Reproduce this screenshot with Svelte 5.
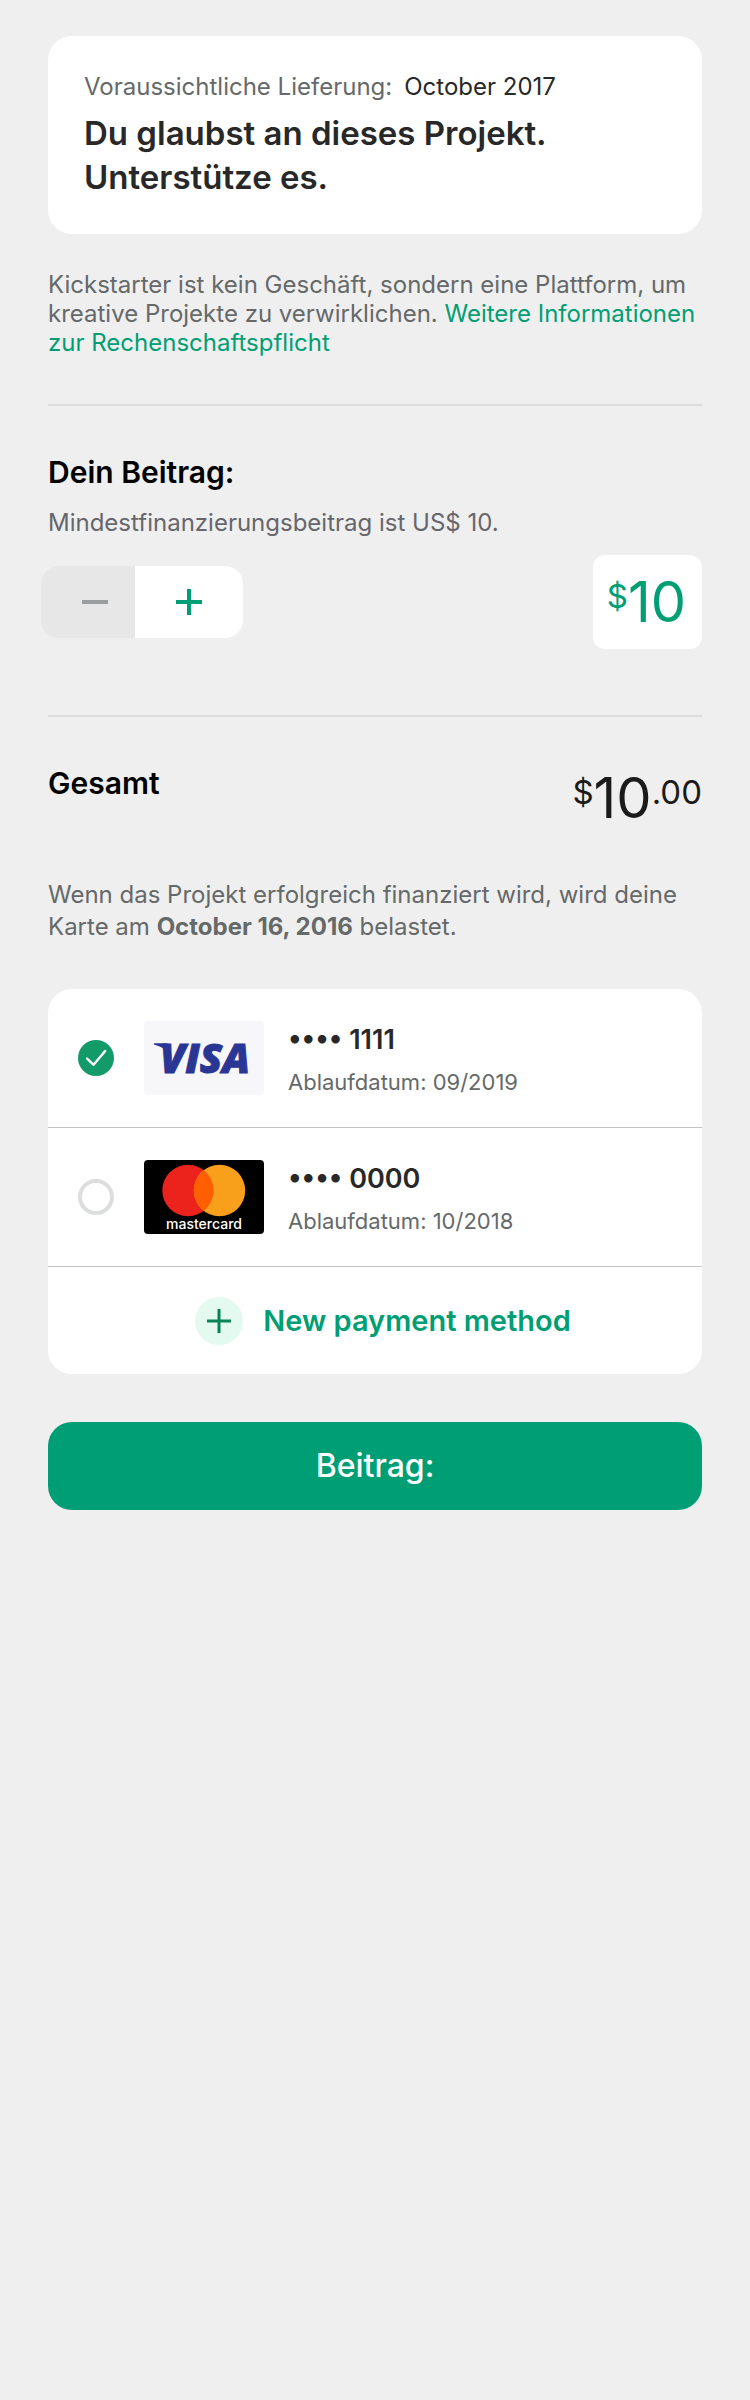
<script>
  const minimum = 10;
  let amount = $state(10);
  let selected = $state('visa');

  const cards = [
    { id: 'visa', digits: '1111', expires: '09/2019' },
    { id: 'mastercard', digits: '0000', expires: '10/2018' }
  ];
</script>

<main>
  <section class="card summary">
    <p class="delivery"><span>Voraussichtliche Lieferung:</span><time datetime="2017-10">October 2017</time></p>
    <h1>Du glaubst an dieses Projekt. Unterstütze es.</h1>
  </section>

  <p class="disclaimer">
    Kickstarter ist kein Geschäft, sondern eine Plattform, um kreative Projekte zu verwirklichen.
    <a href="#rechenschaft">Weitere Informationen zur Rechenschaftspflicht</a>
  </p>

  <hr />

  <section class="pledge">
    <h2><label for="amount">Dein Beitrag:</label></h2>
    <p class="hint">Mindestfinanzierungsbeitrag ist US$ {minimum}.</p>
    <div class="controls">
      <div class="stepper">
        <button type="button" class="minus" aria-label="Weniger" disabled={amount <= minimum} onclick={() => (amount -= 1)}>
          <svg width="26" height="26" viewBox="0 0 26 26"><path d="M0 13h26" /></svg>
        </button>
        <button type="button" class="plus" aria-label="Mehr" onclick={() => (amount += 1)}>
          <svg width="26" height="26" viewBox="0 0 26 26"><path d="M0 13h26M13 0v26" /></svg>
        </button>
      </div>
      <div class="amount">
        <span class="small">$</span><input id="amount" type="text" inputmode="numeric" bind:value={amount} />
      </div>
    </div>
  </section>

  <hr class="second" />

  <section class="total">
    <h2>Gesamt</h2>
    <p class="sum"><span class="small">$</span><span>{amount}</span><span class="small">.00</span></p>
  </section>

  <p class="charge">
    Wenn das Projekt erfolgreich finanziert wird, wird deine Karte am <strong>October 16, 2016</strong> belastet.
  </p>

  <section class="card methods">
    {#each cards as card (card.id)}
      <label class="method">
        <span class="radio">
          <input type="radio" name="method" value={card.id} bind:group={selected} />
          {#if selected === card.id}
            <svg width="36" height="36" viewBox="0 0 36 36"><path d="M9 18.5l6.5 6.3L27.2 11" /></svg>
          {/if}
        </span>
        {#if card.id === 'visa'}
          <svg class="logo" width="120" height="74" viewBox="0 0 120 74" role="img" aria-label="Visa">
            <rect width="120" height="74" rx="4" fill="#f7f7fa" />
            <path d="M10 22.2h12c2 0 3 1 3.400 3l2.600 13C24 29.500 18 25.500 10 23.400z" fill="#2a3694" />
            <text class="visa" x="16" y="51.5">VISA</text>
          </svg>
        {:else}
          <svg class="logo" width="120" height="74" viewBox="0 0 120 74" role="img" aria-label="Mastercard">
            <rect width="120" height="74" rx="4" fill="#000" />
            <circle cx="44" cy="30.5" r="25.7" fill="#ec221c" />
            <circle cx="75.5" cy="30.5" r="25.7" fill="#f8a01b" />
            <path d="M59.75 10.2a25.7 25.7 0 0 1 0 40.6a25.7 25.7 0 0 1 0-40.6z" fill="#ff5f00" />
            <text class="mc" x="60" y="69" text-anchor="middle">mastercard</text>
          </svg>
        {/if}
        <span class="info">
          <span class="number">•••• {card.digits}</span>
          <span class="expiry">Ablaufdatum: {card.expires}</span>
        </span>
      </label>
    {/each}
    <button type="button" class="new">
      <span class="badge">
        <svg width="24" height="24" viewBox="0 0 24 24"><path d="M0 12h24M12 0v24" /></svg>
      </span>
      New payment method
    </button>
  </section>

  <button type="submit" class="submit">Beitrag:</button>
</main>

<style>
  :global(body) {
    background: #efefef;
  }

  main {
    padding: 36px 48px;
    font-family: Inter, "Liberation Sans", sans-serif;
    font-size: 24px;
    line-height: 32px;
    color: #656969;
  }

  main, main * {
    box-sizing: border-box;
  }

  h1, h2, p {
    margin: 0;
  }

  button, input {
    margin: 0;
    border: 0;
    font: inherit;
    cursor: pointer;
  }

  svg {
    display: block;
  }

  .card {
    background: #fff;
    border-radius: 24px;
    overflow: hidden;
  }

  .summary {
    padding: 35px 36px;
  }

  .delivery {
    display: flex;
    gap: 12px;
    margin-bottom: 8px;
  }

  time {
    color: #282828;
  }

  h1 {
    max-width: 520px;
    font-size: 33px;
    line-height: 44px;
    font-weight: 600;
    color: #282828;
  }

  h2 {
    font-size: 30px;
    line-height: 36px;
    font-weight: 600;
    color: #000;
  }

  .disclaimer {
    margin-top: 36px;
    line-height: 29px;
  }

  a {
    color: #009e74;
    text-decoration: none;
  }

  hr {
    height: 2px;
    margin: 47px 0 48px;
    border: 0;
    background: #dcdcdc;
  }

  hr.second {
    margin-top: 66px;
  }

  .hint {
    margin: 17px 0 16px;
    color: #66666c;
  }

  .controls {
    display: flex;
    align-items: center;
    justify-content: space-between;
  }

  .stepper {
    display: flex;
    height: 72px;
    margin-left: -7px;
    border-radius: 18px;
    overflow: hidden;
  }

  .stepper button {
    display: grid;
    place-items: center;
    padding: 0;
  }

  .stepper path {
    stroke: currentColor;
    stroke-width: 4;
  }

  .stepper .minus {
    width: 94px;
    padding-left: 14px;
    background: #fff;
    color: #009e74;
  }

  .stepper .minus:disabled {
    background: #e7e7e7;
    color: #9b9e9e;
  }

  .stepper .plus {
    width: 108px;
    background: #fff;
    color: #009e74;
  }

  .amount {
    display: flex;
    align-items: flex-start;
    padding: 19px 14px;
    border-radius: 12px;
    background: #fff;
    color: #009e74;
    font-size: 56px;
    line-height: 56px;
  }

  .amount input {
    width: 60px;
    height: 56px;
    padding: 0;
    background: none;
    color: inherit;
    field-sizing: content;
  }

  .small {
    font-size: 33px;
    line-height: 44px;
  }

  .total {
    display: flex;
    justify-content: space-between;
  }

  .sum {
    display: flex;
    margin-top: 5px;
    font-size: 56px;
    line-height: 56px;
    color: #1b1b1b;
  }

  .charge {
    margin-top: 53px;
  }

  .methods {
    margin-top: 46px;
  }

  .method {
    display: flex;
    align-items: center;
    height: 139px;
    padding: 0 30px;
    border-bottom: 1px solid #c3c3c3;
    cursor: pointer;
  }

  .radio {
    display: grid;
    margin-right: 30px;
  }

  .radio > * {
    grid-area: 1 / 1;
  }

  .radio input {
    appearance: none;
    width: 36px;
    height: 36px;
    border: 4px solid #dcdede;
    border-radius: 50%;
  }

  .radio input:checked {
    border: 0;
    background: #129a69;
  }

  .radio svg {
    pointer-events: none;
  }

  .radio path {
    fill: none;
    stroke: #fff;
    stroke-width: 2.4;
    stroke-linecap: round;
    stroke-linejoin: round;
  }

  .visa {
    font: italic 800 41px "Open Sans", sans-serif;
    fill: #2a3694;
    stroke: #2a3694;
    stroke-width: 1;
  }

  .mc {
    font: 500 14px Inter, sans-serif;
    fill: #fff;
  }

  .info {
    display: grid;
    gap: 4px;
    margin-left: 24px;
    padding-top: 3px;
  }

  .number {
    font-size: 27px;
    line-height: 40px;
    font-weight: 600;
    color: #282828;
  }

  .expiry {
    font-size: 22px;
    line-height: 36px;
  }

  .new {
    display: flex;
    align-items: center;
    justify-content: center;
    gap: 20px;
    width: 100%;
    height: 107px;
    padding: 0 0 0 16px;
    background: #fff;
    color: #009e74;
    font-size: 29px;
    line-height: 36px;
    font-weight: 600;
  }

  .badge {
    display: grid;
    place-items: center;
    width: 48px;
    height: 48px;
    border-radius: 50%;
    background: #e4f9f0;
  }

  .badge path {
    stroke: #078456;
    stroke-width: 3;
  }

  .submit {
    display: block;
    width: 100%;
    height: 88px;
    margin-top: 48px;
    border-radius: 24px;
    background: #009e74;
    color: #fff;
    font-size: 32px;
    font-weight: 500;
  }
</style>
